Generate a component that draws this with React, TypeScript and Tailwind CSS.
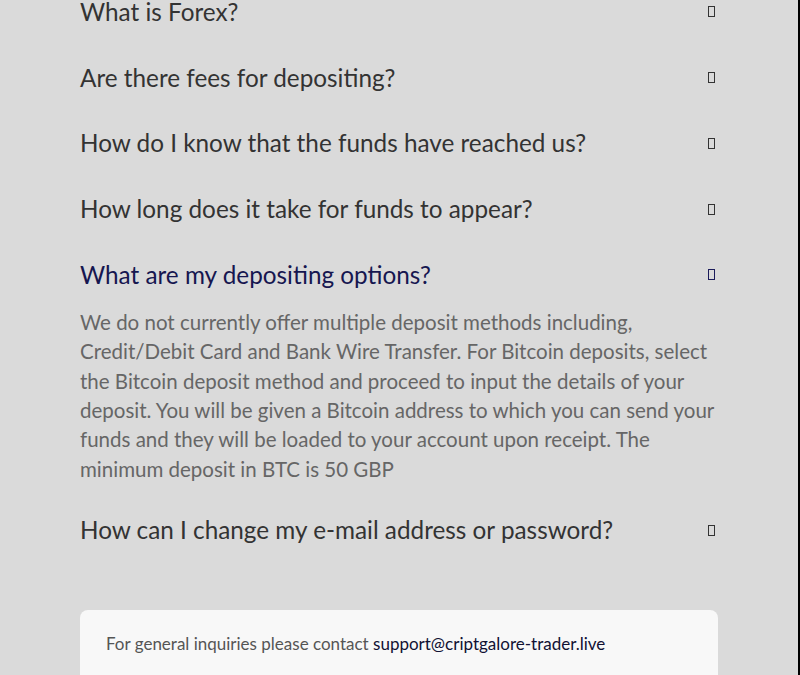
const faqs = [
  'What is Forex?',
  'Are there fees for depositing?',
  'How do I know that the funds have reached us?',
  'How long does it take for funds to appear?',
  'What are my depositing options?',
  'How can I change my e-mail address or password?',
];

const openIndex = 4;

const answerLines = [
  'We do not currently offer multiple deposit methods including,',
  'Credit/Debit Card and Bank Wire Transfer. For Bitcoin deposits, select',
  'the Bitcoin deposit method and proceed to input the details of your',
  'deposit. You will be given a Bitcoin address to which you can send your',
  'funds and they will be loaded to your account upon receipt. The',
  'minimum deposit in BTC is 50 GBP',
];

function Tofu({ active }: { active: boolean }) {
  return (
    <span
      className={
        active
          ? 'inline-block h-[11px] w-[7px] border border-[#1b1b5a]'
          : 'inline-block h-[11px] w-[7px] border border-[#333333]'
      }
    />
  );
}

export default function App() {
  return (
    <div className="h-[675px] overflow-hidden border-r-2 border-black bg-[#dadada] font-['Lato',sans-serif]">
      <div className="mx-auto -mt-[21px] w-[638px]">
        {faqs.map((q, i) => (
          <div key={q}>
            <div className="flex h-[65.75px] items-center justify-between pr-[3px]">
              <h3
                className={
                  i === openIndex
                    ? 'text-[24.3px] leading-[30px] text-[#161650]'
                    : 'text-[24.3px] leading-[30px] text-[#333333]'
                }
              >
                {q}
              </h3>
              <Tofu active={i === openIndex} />
            </div>
            {i === openIndex && (
              <p className="mb-[13px] text-[20.5px] leading-[29.4px] text-[#666666]">
                {answerLines.map((line, j) => (
                  <span key={j} className="block whitespace-nowrap">
                    {line}
                  </span>
                ))}
              </p>
            )}
          </div>
        ))}
        <div className="mt-[47px] rounded-lg bg-[#f8f8f8] px-[26px] pb-8 pt-[22px] text-[17px] leading-6 text-[#555555]">
          For general inquiries please contact{' '}
          <span className="text-[#111133]">support@criptgalore-trader.live</span>
        </div>
      </div>
    </div>
  );
}
